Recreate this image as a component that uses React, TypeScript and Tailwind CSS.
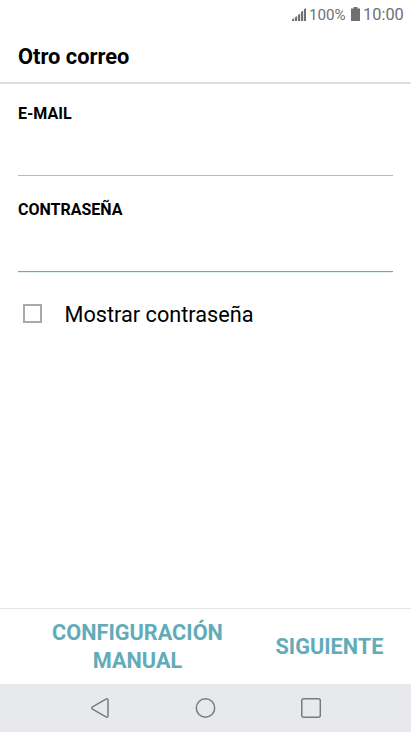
import React from "react";

function StatusBar() {
  return (
    <div className="flex h-[30px] shrink-0 items-center pl-[292px] text-[#707070]">
      <svg width="14" height="13" viewBox="0 0 14 13" fill="currentColor" className="mb-px shrink-0">
        <path d="M0 13v-1.500l2.200-1.400V13zM3 13V9.500l2.200-1.500v5zM6 13V7l2.200-1.500V13zM9 13V4l2.200-1.500V13zM12 13V1.300L14 0v13z" />
      </svg>
      <span className="ml-[3px] w-[37px] whitespace-nowrap text-[15.200px] leading-4">100%</span>
      <svg width="9" height="14" viewBox="0 0 9 14" fill="currentColor" className="ml-[5px] mb-[3px] shrink-0">
        <path d="M2.500 0h4v1.500H9V14H0V1.500h2.500z" />
      </svg>
      <span className="ml-[3px] whitespace-nowrap text-[16.400px] leading-4">10:00</span>
    </div>
  );
}

function Field({ label, focused = false }: { label: string; focused?: boolean }) {
  return (
    <label className="flex h-24 flex-col justify-between">
      <span className="mt-6 text-[16px] leading-5 font-bold">{label}</span>
      <span className={`h-px ${focused ? "bg-[#6baab4] shadow-[0_1px_0_#e4f2f5]" : "bg-[#b8b8b8]"}`} />
    </label>
  );
}

function NavigationBar() {
  return (
    <nav className="flex h-12 shrink-0 items-center bg-[#e8e9ed] pl-[90px]">
      <svg width="20" height="22" viewBox="0 0 20 22" fill="none" stroke="#7b7b7d" strokeWidth="1.500" strokeLinejoin="round">
        <path d="M2.500 9.900 15.500 2.300Q18 1 18 3.500V18.500Q18 21 15.500 19.700L2.500 12.100Q1 11 2.500 9.900Z" />
      </svg>
      <svg width="22" height="22" viewBox="0 0 22 22" fill="none" stroke="#7b7b7d" strokeWidth="1.500" className="ml-[84px]">
        <circle cx="11.500" cy="11" r="9.200" />
      </svg>
      <svg width="22" height="22" viewBox="0 0 22 22" fill="none" stroke="#7b7b7d" strokeWidth="1.500" className="ml-[84px]">
        <rect x="1.800" y="1.800" width="18.500" height="18.500" rx="2" />
      </svg>
    </nav>
  );
}

export default function App() {
  return (
    <div className="flex h-[732px] w-[411px] flex-col overflow-hidden bg-white font-['Roboto',sans-serif] text-black">
      <StatusBar />
      <header className="flex h-[54px] shrink-0 items-center border-b-2 border-[#dedede] pt-px pl-[18px]">
        <h1 className="text-[21.800px] leading-7 font-bold">Otro correo</h1>
      </header>
      <main className="flex flex-1 flex-col px-[18px]">
        <div className="-mt-1 flex flex-col">
          <Field label="E-MAIL" />
          <Field label="CONTRASEÑA" focused />
        </div>
        <label className="mt-7 flex items-start pl-[5px]">
          <span className="mt-1 h-[19px] w-[19px] border-2 border-[#a9a9a9]" />
          <span className="ml-[22.500px] pt-px text-[21.700px] leading-7">Mostrar contraseña</span>
        </label>
      </main>
      <footer className="flex h-[76px] shrink-0 items-center border-t border-[#e5e5e5] text-[21.700px] leading-7 font-bold text-[#62abb8]">
        <button className="ml-[37.500px] w-[200px] text-center leading-7">CONFIGURACIÓN MANUAL</button>
        <button className="ml-[38px] whitespace-nowrap">SIGUIENTE</button>
      </footer>
      <NavigationBar />
    </div>
  );
}
